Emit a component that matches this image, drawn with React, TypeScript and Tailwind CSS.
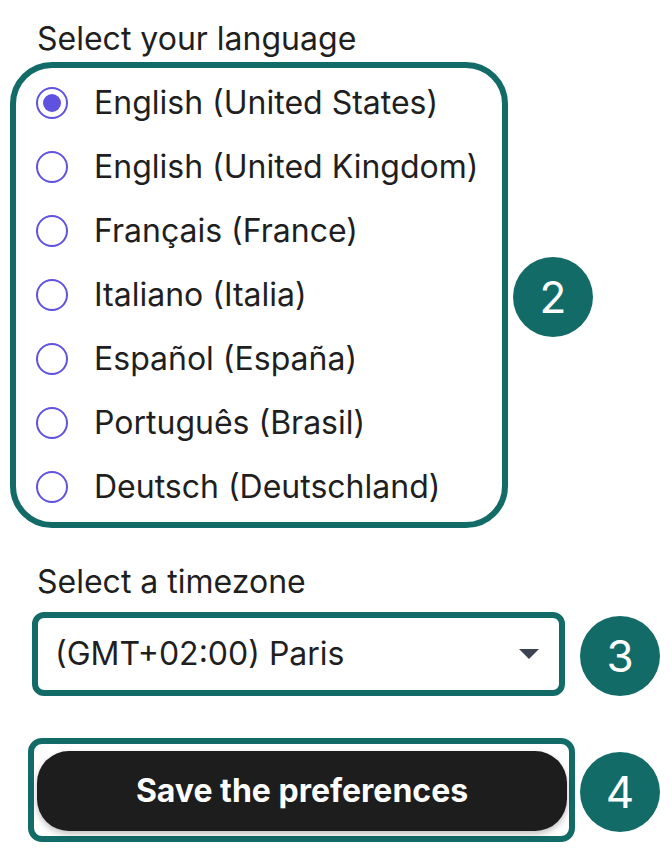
import { useState } from "react"

const languages = [
  "English (United States)",
  "English (United Kingdom)",
  "Français (France)",
  "Italiano (Italia)",
  "Español (España)",
  "Português (Brasil)",
  "Deutsch (Deutschland)",
]

function Badge({ n, className }: { n: number; className: string }) {
  return (
    <div
      className={`absolute flex h-[80px] w-[80px] items-center justify-center rounded-full bg-[#136b68] text-[44px] leading-none text-white ${className}`}
    >
      {n}
    </div>
  )
}

export default function App() {
  const [lang, setLang] = useState(0)

  return (
    <div className="relative h-[860px] w-[672px] bg-white text-[#1f1f1f] [font-family:Inter,'Liberation_Sans',sans-serif]">
      <div className="pl-[37px] pt-[22px] text-[32px] leading-[34px]">Select your language</div>

      {/* langue */}
      <div className="ml-[10px] mt-[6px] w-[498px] rounded-[42px] border-[6px] border-[#136b68] px-[20px] py-[3px]">
        {languages.map((l, i) => (
          <label key={l} className="flex h-[64px] cursor-pointer items-center gap-[26px]" onClick={() => setLang(i)}>
            <span className="flex h-[32px] w-[32px] shrink-0 items-center justify-center rounded-full border-2 border-[#6052e0] bg-white">
              {lang === i && <span className="h-[18px] w-[18px] rounded-full bg-[#6052e0]" />}
            </span>
            <span className="text-[32px] leading-none">{l}</span>
          </label>
        ))}
      </div>

      <div className="pl-[37px] pt-[37px] text-[32px] leading-[34px]">Select a timezone</div>

      <div className="relative ml-[32px] mt-[13px] flex h-[84px] w-[533px] items-center justify-between rounded-[12px] border-[6px] border-[#136b68] bg-white pl-[17px] pr-[20px]">
        <span className="text-[32px] leading-none">(GMT+02:00) Paris</span>
        <svg width="20" height="10" viewBox="0 0 20 10">
          <path d="M0 0 L20 0 L10 10 Z" fill="#3d4451" />
        </svg>
      </div>

      <div className="ml-[28px] mt-[42px] h-[104px] w-[547px] rounded-[14px] border-[6px] border-[#136b68] pb-[5px] pl-[3px] pr-[2px] pt-[7px]">
        <button className="flex h-[80px] w-full items-center justify-center rounded-[32px] bg-[#1d1d1d] text-[32px] font-bold text-white shadow-[0_3px_6px_rgba(0,0,0,0.25)]">
          Save the preferences
        </button>
      </div>

      <Badge n={2} className="left-[513px] top-[257px]" />
      <Badge n={3} className="left-[580px] top-[616px]" />
      <Badge n={4} className="left-[580px] top-[752px]" />
    </div>
  )
}
